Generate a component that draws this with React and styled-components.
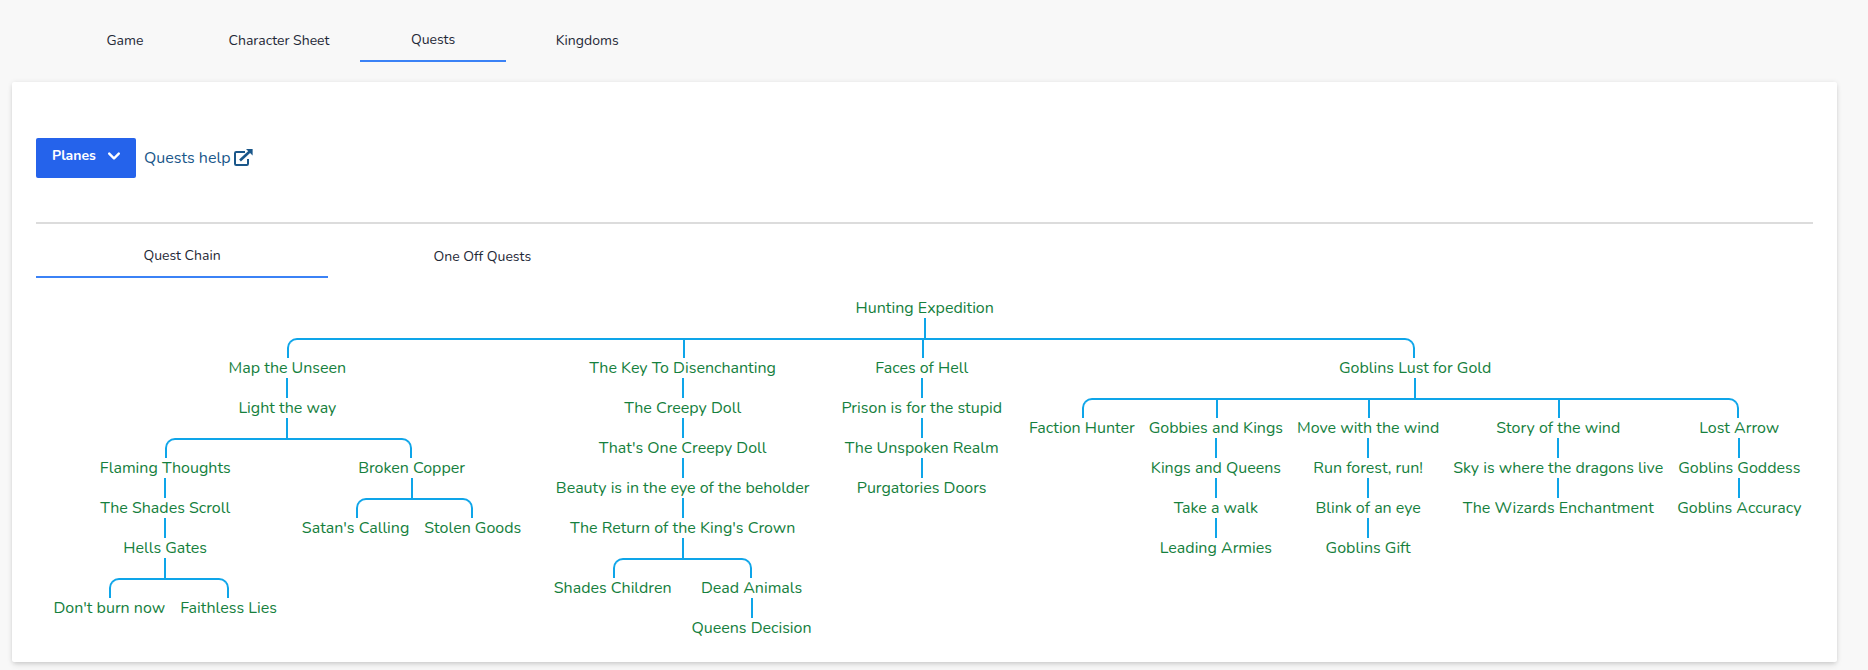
import React from "react";
import styled, { createGlobalStyle, css } from "styled-components";

const GlobalStyle = createGlobalStyle`
  *, *::before, *::after { box-sizing: border-box; }
  html { background: #f8f8f8; }
  body {
    margin: 0;
    height: 670px;
    overflow: hidden;
    background: #f8f8f8;
    color: #1f2937;
    font-family: Nunito, Lato, "Open Sans", sans-serif;
    font-size: 16px;
    line-height: 20px;
  }
`;

const Page = styled.div`
  padding: 20px 30.6px 0 12px;
`;

const TabBar = styled.nav`
  display: flex;
  gap: ${(p) => p.$gap}px;
  padding-left: ${(p) => p.$inset || 0}px;
  height: 42px;
`;

const Tab = styled.button`
  width: ${(p) => p.$width}px;
  height: 42px;
  padding: 0;
  border: 0;
  border-bottom: ${(p) => (p.$active ? "2px solid #3b82f6" : "0")};
  background: transparent;
  color: inherit;
  font-family: inherit;
  font-size: 14px;
  line-height: 20px;
  text-align: center;
`;

const Card = styled.main`
  margin-top: 20px;
  height: 580px;
  padding: 56px 24px 0;
  background: #fff;
  border-radius: 2px;
  box-shadow: 0 4px 6px -1px rgba(0, 0, 0, 0.1), 0 2px 4px -1px rgba(0, 0, 0, 0.06), 0 0 5px rgba(0, 0, 0, 0.08);
`;

const Toolbar = styled.div`
  display: flex;
  align-items: center;
  gap: 8px;
  height: 40px;
`;

const MenuButton = styled.button`
  display: flex;
  align-items: center;
  width: 100px;
  height: 40px;
  padding: 0 0 4px 16px;
  gap: 6px;
  border: 0;
  border-radius: 2px;
  background: #2563eb;
  color: #fff;
  font-family: inherit;
  font-size: 14px;
  font-weight: 700;
  line-height: 20px;
`;

const HelpLink = styled.a`
  display: flex;
  align-items: center;
  gap: 4px;
  color: #1a578a;
`;

const ExternalIcon = styled.svg`
  margin-bottom: 2px;
`;

const Rule = styled.hr`
  height: 2px;
  margin: 44px 0 12px;
  border: 0;
  background: #dcdcdc;
`;

const Chart = styled.section`
  display: flex;
  flex-direction: column;
  margin-top: 20px;
`;

const line = "2px solid #0ea5e9";

const Branches = styled.ul`
  position: relative;
  display: flex;
  margin: 0;
  padding: 20px 0 0;
  list-style: none;

  &::before {
    content: "";
    position: absolute;
    top: 0;
    left: calc(50% - 1px);
    height: 20px;
    border-left: ${line};
  }
`;

const forked = css`
  padding: 20px 5px 0;

  &::before,
  &::after {
    content: "";
    position: absolute;
    top: 0;
    width: 50%;
    height: 20px;
    border-top: ${line};
  }
  &::before { right: 50%; }
  &::after { left: 50%; border-left: ${line}; }

  &:first-child::before,
  &:last-child::after { border: 0; }
  &:first-child::after { border-top-left-radius: 10px; }
  &:last-child::before { border-right: ${line}; border-top-right-radius: 10px; }
`;

const Branch = styled.li`
  position: relative;
  display: flex;
  flex: auto;
  flex-direction: column;
  ${(p) => p.$forked && forked}
`;

const QuestLabel = styled.a`
  align-self: center;
  height: 20px;
  color: #15803d;
  white-space: nowrap;
`;

const q = (name, ...next) => ({ name, next });

const quests = q("Hunting Expedition",
  q("Map the Unseen",
    q("Light the way",
      q("Flaming Thoughts",
        q("The Shades Scroll",
          q("Hells Gates",
            q("Don't burn now"),
            q("Faithless Lies")))),
      q("Broken Copper",
        q("Satan's Calling"),
        q("Stolen Goods")))),
  q("The Key To Disenchanting",
    q("The Creepy Doll",
      q("That's One Creepy Doll",
        q("Beauty is in the eye of the beholder",
          q("The Return of the King's Crown",
            q("Shades Children"),
            q("Dead Animals",
              q("Queens Decision"))))))),
  q("Faces of Hell",
    q("Prison is for the stupid",
      q("The Unspoken Realm",
        q("Purgatories Doors")))),
  q("Goblins Lust for Gold",
    q("Faction Hunter"),
    q("Gobbies and Kings",
      q("Kings and Queens",
        q("Take a walk",
          q("Leading Armies")))),
    q("Move with the wind",
      q("Run forest, run!",
        q("Blink of an eye",
          q("Goblins Gift")))),
    q("Story of the wind",
      q("Sky is where the dragons live",
        q("The Wizards Enchantment"))),
    q("Lost Arrow",
      q("Goblins Goddess",
        q("Goblins Accuracy")))));

function Quest({ quest }) {
  return (
    <>
      <QuestLabel>{quest.name}</QuestLabel>
      {quest.next.length > 0 && (
        <Branches>
          {quest.next.map((child) => (
            <Branch key={child.name} $forked={quest.next.length > 1}>
              <Quest quest={child} />
            </Branch>
          ))}
        </Branches>
      )}
    </>
  );
}

const pages = ["Game", "Character Sheet", "Quests", "Kingdoms"];
const views = ["Quest Chain", "One Off Quests"];

export default function App() {
  return (
    <Page>
      <GlobalStyle />
      <TabBar $gap={8.1} $inset={39.9}>
        {pages.map((name) => (
          <Tab key={name} $width={146} $active={name === "Quests"}>
            {name}
          </Tab>
        ))}
      </TabBar>
      <Card>
        <Toolbar>
          <MenuButton>
            Planes
            <svg width="24" height="24" viewBox="0 0 20 20" fill="currentColor">
              <path fillRule="evenodd" clipRule="evenodd" d="M5.293 7.293a1 1 0 011.414 0L10 10.586l3.293-3.293a1 1 0 111.414 1.414l-4 4a1 1 0 01-1.414 0l-4-4a1 1 0 010-1.414z" />
            </svg>
          </MenuButton>
          <HelpLink>
            Quests help
            <ExternalIcon width="19" height="17" viewBox="0 0 19 17" fill="none" stroke="currentColor">
              <path d="M11 3H2.200Q1 3 1 4.200V14.800Q1 16 2.200 16H12.800Q14 16 14 14.800V10" strokeWidth="2" />
              <path d="M6 11.500L15.500 2.800" strokeWidth="2.600" />
              <path d="M12 0H18.600V6.600Z" fill="currentColor" stroke="none" />
            </ExternalIcon>
          </HelpLink>
        </Toolbar>
        <Rule />
        <TabBar $gap={8.4}>
          {views.map((name) => (
            <Tab key={name} $width={292} $active={name === "Quest Chain"}>
              {name}
            </Tab>
          ))}
        </TabBar>
        <Chart>
          <Quest quest={quests} />
        </Chart>
      </Card>
    </Page>
  );
}
